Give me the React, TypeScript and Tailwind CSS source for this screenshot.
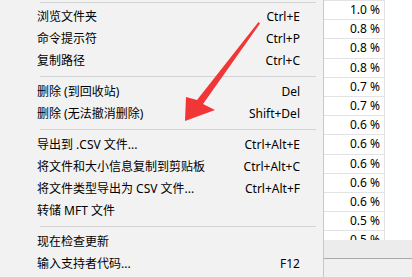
import React from "react";

type Item = { label: string; key?: string } | "sep";

const items: Item[] = [
  { label: "浏览文件夹", key: "Ctrl+E" },
  { label: "命令提示符", key: "Ctrl+P" },
  { label: "复制路径", key: "Ctrl+C" },
  "sep",
  { label: "删除 (到回收站)", key: "Del" },
  { label: "删除 (无法撤消删除)", key: "Shift+Del" },
  "sep",
  { label: "导出到 .CSV 文件...", key: "Ctrl+Alt+E" },
  { label: "将文件和大小信息复制到剪贴板", key: "Ctrl+Alt+C" },
  { label: "将文件类型导出为 CSV 文件...", key: "Ctrl+Alt+F" },
  { label: "转储 MFT 文件" },
  "sep",
  { label: "现在检查更新" },
  { label: "输入支持者代码...", key: "F12" },
];

const percents = ["1.0", "0.8", "0.8", "0.8", "0.7", "0.7", "0.6", "0.6", "0.6", "0.6", "0.6", "0.5", "0.5"];

function Separator() {
  return (
    <div className="py-[4px] pl-[40px] pr-[7px]">
      <div className="h-px bg-[#d4d4d4]" />
    </div>
  );
}

export default function App() {
  return (
    <div
      className="relative flex h-[277px] w-[412px] overflow-hidden bg-white text-[12px] text-black"
      style={{ fontFamily: '"Noto Sans", "Noto Sans CJK SC", sans-serif' }}
    >
      {/* context menu */}
      <div className="flex h-full w-[324px] shrink-0 flex-col border-r border-[#c8c8c8] bg-[#f2f2f2]">
        <div className="pt-[2px] pb-[3px] pl-[40px] pr-[7px]">
          <div className="h-px bg-[#d4d4d4]" />
        </div>
        {items.map((it, i) =>
          it === "sep" ? (
            <Separator key={i} />
          ) : (
            <div key={i} className="flex h-[22px] items-center justify-between pl-[37px] pr-[23px] leading-none">
              <span>{it.label}</span>
              {it.key && <span>{it.key}</span>}
            </div>
          )
        )}
      </div>

      {/* list behind the menu */}
      <div className="flex h-full flex-1 flex-col">
        <div className="flex h-[240px] overflow-hidden">
          <div className="flex w-[61px] flex-col border-r border-[#e3e3e3]">
            <div className="h-[1px] shrink-0 border-b border-[#e3e3e3]" />
            {percents.map((p, i) => (
              <div
                key={i}
                className="flex h-[19.2px] shrink-0 items-center justify-end border-b border-[#e3e3e3] pr-[4px] leading-none"
              >
                {p} %
              </div>
            ))}
          </div>
          <div className="flex-1 bg-white" />
        </div>
        <div className="h-[18px] bg-[#ececec]" />
        <div className="h-px bg-[#a9a9a9]" />
        <div className="flex-1 bg-[#f0f0f0]" />
      </div>

      {/* red annotation arrow */}
      <svg className="pointer-events-none absolute left-0 top-0" width="412" height="277" viewBox="0 0 412 277">
        <polygon
          points="258.5,22 260,23.5 203,104 215,110 185,121 186,97 197,100"
          fill="#f03636"
        />
      </svg>
    </div>
  );
}
